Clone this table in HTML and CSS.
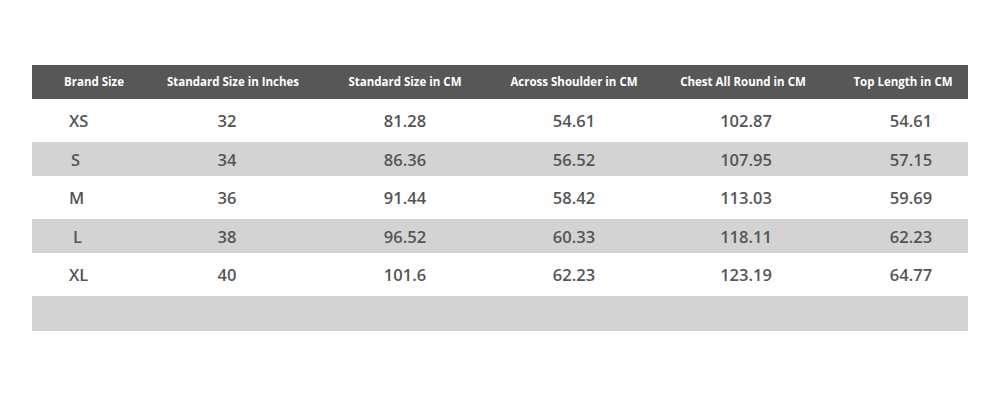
FILE: index.html
```html
<!DOCTYPE html>
<html>
<head>
<meta charset="utf-8">
<link rel="stylesheet" href="styles.css">
</head>
<body>
<div class="chart">
  <div class="row head">
    <div class="cell c1">Brand Size</div>
    <div class="cell">Standard Size in Inches</div>
    <div class="cell">Standard Size in CM</div>
    <div class="cell">Across Shoulder in CM</div>
    <div class="cell">Chest All Round in CM</div>
    <div class="cell">Top Length in CM</div>
  </div>
  <div class="row tall">
    <div class="cell c1 size">XS</div>
    <div class="cell n2">32</div>
    <div class="cell">81.28</div>
    <div class="cell">54.61</div>
    <div class="cell n5">102.87</div>
    <div class="cell c6">54.61</div>
  </div>
  <div class="row shade">
    <div class="cell c1 size s2">S</div>
    <div class="cell n2">34</div>
    <div class="cell">86.36</div>
    <div class="cell">56.52</div>
    <div class="cell n5">107.95</div>
    <div class="cell c6">57.15</div>
  </div>
  <div class="row tall">
    <div class="cell c1 size">M</div>
    <div class="cell n2">36</div>
    <div class="cell">91.44</div>
    <div class="cell">58.42</div>
    <div class="cell n5">113.03</div>
    <div class="cell c6">59.69</div>
  </div>
  <div class="row shade">
    <div class="cell c1 size s4">L</div>
    <div class="cell n2">38</div>
    <div class="cell">96.52</div>
    <div class="cell">60.33</div>
    <div class="cell n5">118.11</div>
    <div class="cell c6">62.23</div>
  </div>
  <div class="row tall">
    <div class="cell c1 size">XL</div>
    <div class="cell n2">40</div>
    <div class="cell">101.6</div>
    <div class="cell">62.23</div>
    <div class="cell n5">123.19</div>
    <div class="cell c6">64.77</div>
  </div>
  <div class="row shade empty"></div>
</div>
</body>
</html>
```
FILE: styles.css
```css
html, body {
  margin: 0;
  padding: 0;
  background: #ffffff;
}
body {
  width: 1000px;
  height: 400px;
  overflow: hidden;
}
.chart {
  margin: 65px 0 0 32px;
  width: 936px;
  font-family: "Open Sans", "Liberation Sans", sans-serif;
}
.row {
  display: grid;
  grid-template-columns: 124px 154px 190px 148px 190px 130px;
  align-items: center;
  color: #555555;
  font-size: 16.5px;
  font-weight: 600;
}
.row.head {
  height: 34px;
  background: #575757;
  color: #ffffff;
  font-size: 11.5px;
  font-weight: 700;
}
.row.head .cell {
  padding-bottom: 2px;
}
.row.tall {
  height: 43px;
  background: #ffffff;
}
.row.shade {
  height: 34px;
  background: #d3d3d3;
}
.row.empty {
  height: 35px;
}
.cell {
  text-align: center;
  white-space: nowrap;
}
.cell.c6 {
  padding-left: 16px;
}
.cell.size {
  text-align: left;
  padding-left: 37px;
}
.cell.s2 {
  padding-left: 39px;
}
.cell.s4 {
  padding-left: 41px;
}
.cell.n2 {
  padding-right: 12px;
}
.cell.n5 {
  padding-left: 6px;
}
```
